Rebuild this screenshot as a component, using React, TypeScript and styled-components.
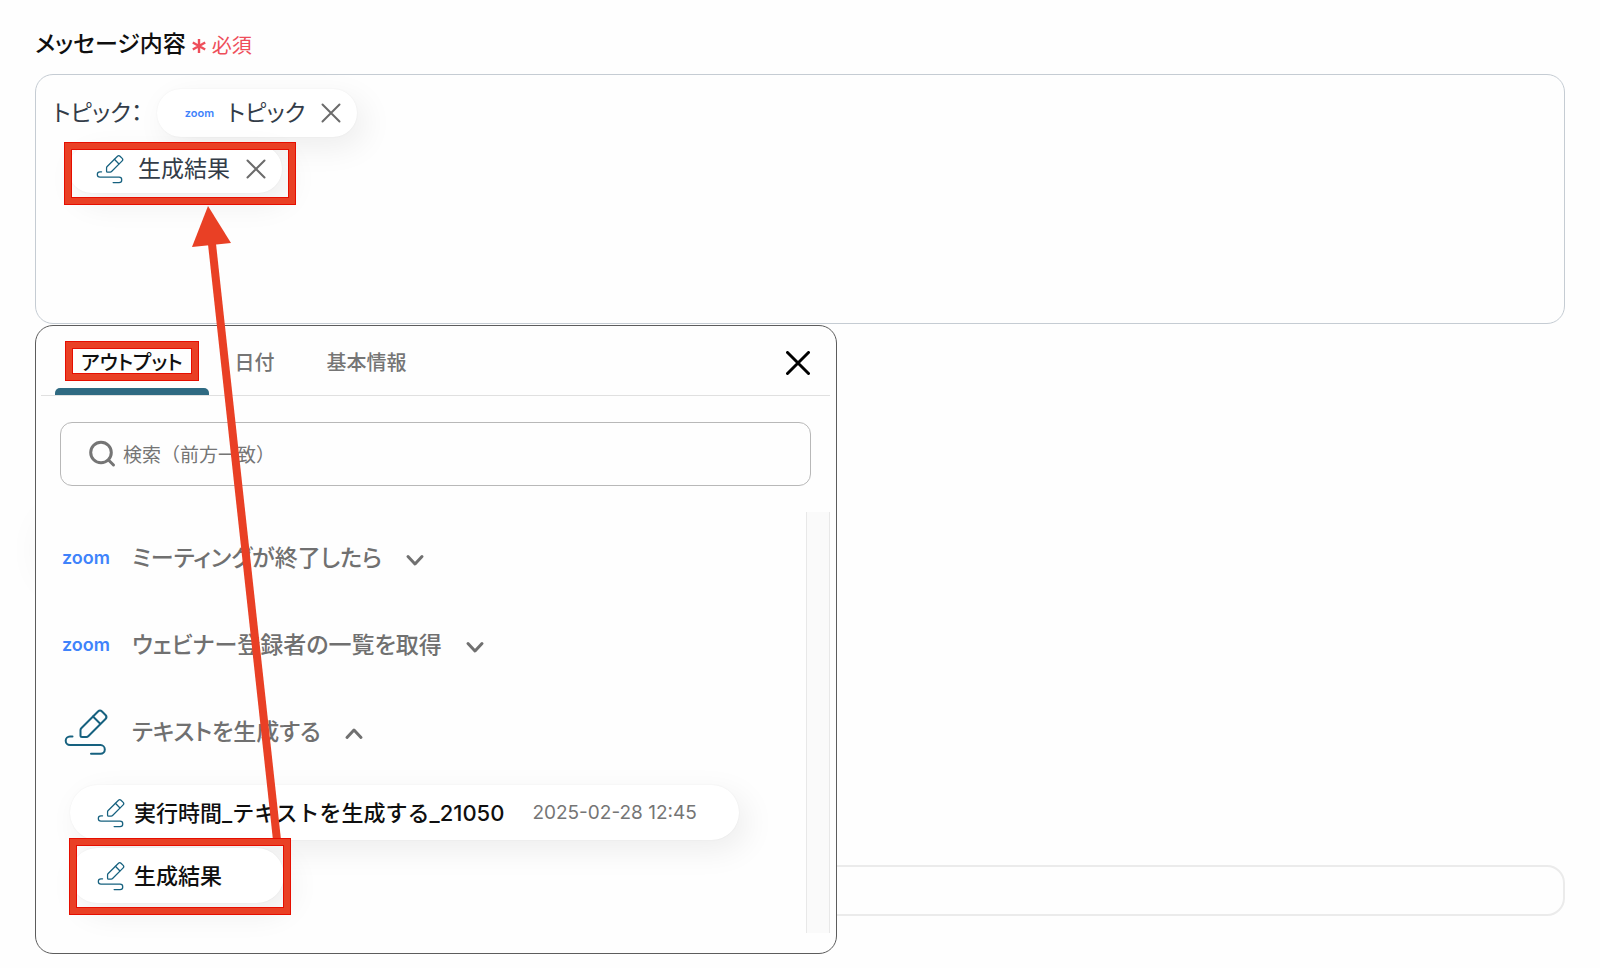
import React from "react";
import styled, { createGlobalStyle, css } from "styled-components";

const GlobalStyle = createGlobalStyle`
  *, *::before, *::after { box-sizing: border-box; }
  body {
    margin: 0;
    background: #fefefe;
    color: #0f0f0f;
    font-family: Inter, "Noto Sans CJK JP", sans-serif;
    font-feature-settings: "palt";
    line-height: 28px;
  }
  button, input { font: inherit; font-feature-settings: inherit; color: inherit; }
`;

const bareButton = css`
  display: flex;
  align-items: center;
  justify-content: center;
  padding: 0;
  border: 0;
  background: none;
  cursor: pointer;
`;

const Page = styled.main`
  position: relative;
  overflow: hidden;
  padding: 24px 35px 52px;
`;

const FieldLabel = styled.div`
  display: flex;
  align-items: center;
  gap: 6px;
  height: 40px;
  font-size: 23px;
  font-weight: 500;
`;

const Required = styled.span`
  display: flex;
  align-items: center;
  gap: 6px;
  padding-top: 3px;
  color: #ee4e5a;
  font-size: 20px;
  font-weight: 400;
`;

const Editor = styled.div`
  margin-top: 10px;
  height: 250px;
  padding: 14px 17px;
  border: 1px solid #c5ccd3;
  border-radius: 18px;
  color: #333c48;
  font-size: 23px;
`;

const EditorLine = styled.div`
  display: flex;
  align-items: center;
  height: 48px;
  margin-bottom: 8px;
`;

const Token = styled.span`
  display: flex;
  align-items: center;
  height: 48px;
  margin-left: 15px;
  padding: 0 16px 0 26px;
  border-radius: 24px;
  background: #fff;
  box-shadow: 0 0 2px rgba(0, 0, 0, 0.06), 8px 10px 32px rgba(0, 0, 0, 0.07);
`;

const TokenText = styled.span`
  margin: 0 16px 0 12px;
`;

const TokenIcon = styled.span`
  display: flex;
  justify-content: center;
  width: 32px;
`;

const IconButton = styled.button<{ $muted?: boolean }>`
  ${bareButton}
  color: ${(p) => (p.$muted ? "#6b6b6b" : "#000")};
`;

const Wordmark = styled.span<{ $size: number }>`
  color: #3f83fb;
  font-size: ${(p) => p.$size}px;
  font-weight: 600;
  line-height: 1;
`;

const NextField = styled.input`
  display: block;
  width: 100%;
  height: 51px;
  margin-top: 541px;
  padding: 0 18px;
  border: 2px solid #ebebeb;
  border-radius: 18px;
  background: #fefefe;
`;

const Popover = styled.section`
  position: absolute;
  top: 325px;
  left: 35px;
  width: 802px;
  height: 629px;
  padding: 0 6px 20px 5px;
  border: 1px solid #5c5c5c;
  border-radius: 18px;
  background: #fefefe;
  display: flex;
  flex-direction: column;
`;

const PopoverGlow = styled.div`
  position: absolute;
  top: 515px;
  left: 45px;
  width: 70px;
  height: 70px;
  border-radius: 35px;
  box-shadow: 0 0 40px rgba(0, 0, 0, 0.08);
`;

const PopoverHeader = styled.header`
  display: flex;
  align-items: stretch;
  justify-content: space-between;
  height: 70px;
  padding: 0 20px 0 14px;
  border-bottom: 1px solid #e0e0e0;
`;

const Tabs = styled.div`
  display: flex;
`;

const Tab = styled.button<{ $active?: boolean }>`
  ${bareButton}
  position: relative;
  padding: 4px 26px 0;
  font-size: 20px;
  font-weight: 500;
  color: ${(p) => (p.$active ? "#0f0f0f" : "#757575")};
  &::after {
    content: "";
    display: ${(p) => (p.$active ? "block" : "none")};
    position: absolute;
    left: 0;
    right: 0;
    bottom: 0;
    height: 7px;
    border-radius: 5px 5px 0 0;
    background: #2f6a82;
  }
`;

const CloseButton = styled(IconButton)`
  padding-top: 4px;
`;

const Search = styled.label`
  display: flex;
  align-items: center;
  gap: 7px;
  flex: none;
  height: 64px;
  margin: 26px 19px;
  padding: 0 27px;
  border: 1px solid #b8b8b8;
  border-radius: 12px;
  color: #757575;
`;

const SearchInput = styled.input`
  flex: 1;
  min-width: 0;
  padding: 4px 0 0;
  border: 0;
  outline: 0;
  background: none;
  font-size: 19px;
  font-feature-settings: normal;
  &::placeholder { color: #757575; opacity: 1; }
`;

const ListArea = styled.div`
  flex: 1;
  display: flex;
  min-height: 0;
`;

const Groups = styled.div`
  flex: 1;
  min-width: 0;
  padding: 2px 21px 0;
`;

const ScrollTrack = styled.div`
  width: 24px;
  border: solid #e8e8e8;
  border-width: 0 1px;
  background: #fafafa;
`;

const GroupButton = styled.button`
  ${bareButton}
  height: 87px;
  color: #707070;
  font-size: 23px;
  font-weight: 500;
`;

const GroupIcon = styled.span`
  display: flex;
  align-items: center;
  width: 48px;
  margin-right: 22px;
`;

const GroupName = styled.span`
  margin-right: 22px;
`;

const Outputs = styled.div`
  display: flex;
  flex-direction: column;
  align-items: flex-start;
  gap: 8px;
  padding: 10px 0 0 8px;
`;

const OutputItem = styled.button`
  ${bareButton}
  height: 55px;
  padding: 0 42px 0 26px;
  border-radius: 28px;
  background: #fff;
  box-shadow: 0 0 2px rgba(0, 0, 0, 0.06), 8px 10px 32px rgba(0, 0, 0, 0.07);
  font-size: 22px;
  font-weight: 500;
  font-feature-settings: normal;
`;

const OutputName = styled.span`
  margin: 0 20px 0 8px;
`;

const OutputDate = styled.span`
  margin-left: 8px;
  color: #757575;
  font-size: 19px;
  font-weight: 400;
`;

const Highlight = styled.div<{ $x: number; $y: number; $w: number; $h: number }>`
  position: absolute;
  left: ${(p) => p.$x}px;
  top: ${(p) => p.$y}px;
  width: ${(p) => p.$w}px;
  height: ${(p) => p.$h}px;
  border: 8px solid #e94025;
  outline: 1px solid #e60e00;
  outline-offset: -1px;
  pointer-events: none;
  &::after {
    content: "";
    position: absolute;
    inset: -1px;
    border: 1px solid #e60e00;
  }
`;

const ArrowLayer = styled.svg`
  position: absolute;
  top: 0;
  left: 0;
  pointer-events: none;
`;

const Zoom = ({ size }: { size: number }) => <Wordmark $size={size}>zoom</Wordmark>;

const Pencil = ({ size, stroke }: { size: number; stroke: number }) => (
  <svg width={size} height={size} viewBox="0 0 48 48" fill="none" stroke="#16617f" strokeWidth={stroke} strokeLinecap="round" strokeLinejoin="round" aria-hidden="true">
    <path d="M18.500 27.500v-5.500q0-1 1-2L36 3.500q2-2 4 0l3.500 3.500q2 2 0 4L26.500 28q-1 1-2 1h-4.500q-1.500 0-1.500-1.500z" />
    <path d="M31 8.500l7 7" />
    <path d="M10.500 28.500H8a4.300 4.300 0 0 0 0 8.600h30.500a4.300 4.300 0 0 1 0 8.600H29" />
  </svg>
);

const Cross = ({ size, stroke }: { size: number; stroke: number }) => (
  <svg width={size} height={size} viewBox={`0 0 ${size} ${size}`} fill="none" stroke="currentColor" strokeWidth={stroke} strokeLinecap="round" aria-hidden="true">
    <path d={`M1.500 1.500L${size - 1.5} ${size - 1.5}M${size - 1.5} 1.500L1.500 ${size - 1.5}`} />
  </svg>
);

const Chevron = ({ up }: { up?: boolean }) => (
  <svg width="22" height="18" viewBox="0 0 22 18" fill="none" stroke="currentColor" strokeWidth="3" strokeLinecap="round" strokeLinejoin="round" aria-hidden="true">
    <path d={up ? "M4 14.500l7-7.500 7 7.500" : "M4 7.500l7 7.500 7-7.500"} />
  </svg>
);

const Asterisk = () => (
  <svg width="14" height="16" viewBox="0 0 14 16" stroke="currentColor" strokeWidth="2.400" strokeLinecap="butt" aria-hidden="true">
    <path d="M7 1v14M.800 4.500l12.400 7M13.200 4.500L.800 11.500" />
  </svg>
);

const SearchIcon = () => (
  <svg width="28" height="28" viewBox="0 0 28 28" fill="none" stroke="currentColor" strokeWidth="3" strokeLinecap="round" aria-hidden="true">
    <circle cx="13" cy="12.500" r="10.300" />
    <path d="M20.500 20l5 5" />
  </svg>
);

export default function App() {
  return (
    <>
      <GlobalStyle />
      <Page>
        <FieldLabel id="message-label">
          メッセージ内容
          <Required>
            <Asterisk />
            必須
          </Required>
        </FieldLabel>
        <Editor role="group" aria-labelledby="message-label">
          <EditorLine>
            <span>トピック：</span>
            <Token>
              <TokenIcon><Zoom size={11} /></TokenIcon>
              <TokenText>トピック</TokenText>
              <IconButton $muted aria-label="トピックを削除"><Cross size={20} stroke={2} /></IconButton>
            </Token>
          </EditorLine>
          <EditorLine>
            <Token>
              <TokenIcon><Pencil size={30} stroke={2} /></TokenIcon>
              <TokenText>生成結果</TokenText>
              <IconButton $muted aria-label="生成結果を削除"><Cross size={20} stroke={2} /></IconButton>
            </Token>
          </EditorLine>
        </Editor>
        <NextField aria-label="追加の入力" />

        <PopoverGlow />
        <Popover>
          <PopoverHeader>
            <Tabs role="tablist">
              <Tab role="tab" aria-selected="true" $active>アウトプット</Tab>
              <Tab role="tab" aria-selected="false">日付</Tab>
              <Tab role="tab" aria-selected="false">基本情報</Tab>
            </Tabs>
            <CloseButton aria-label="閉じる"><Cross size={24} stroke={3} /></CloseButton>
          </PopoverHeader>
          <Search>
            <SearchIcon />
            <SearchInput type="text" aria-label="検索" placeholder="検索（前方一致）" />
          </Search>
          <ListArea>
            <Groups>
              <GroupButton aria-expanded="false">
                <GroupIcon><Zoom size={18} /></GroupIcon>
                <GroupName>ミーティングが終了したら</GroupName>
                <Chevron />
              </GroupButton>
              <GroupButton aria-expanded="false">
                <GroupIcon><Zoom size={18} /></GroupIcon>
                <GroupName>ウェビナー登録者の一覧を取得</GroupName>
                <Chevron />
              </GroupButton>
              <GroupButton aria-expanded="true">
                <GroupIcon><Pencil size={48} stroke={2} /></GroupIcon>
                <GroupName>テキストを生成する</GroupName>
                <Chevron up />
              </GroupButton>
              <Outputs>
                <OutputItem>
                  <Pencil size={30} stroke={2} />
                  <OutputName>実行時間_テキストを生成する_21050</OutputName>
                  <OutputDate>2025-02-28 12:45</OutputDate>
                </OutputItem>
                <OutputItem>
                  <Pencil size={30} stroke={2} />
                  <OutputName>生成結果</OutputName>
                </OutputItem>
              </Outputs>
            </Groups>
            <ScrollTrack />
          </ListArea>
        </Popover>

        <ArrowLayer width="400" height="920" viewBox="0 0 400 920" aria-hidden="true">
          <path d="M212 244L277 840" stroke="#e94025" strokeWidth="8" />
          <path d="M208 206L192 247L231 243Z" fill="#e94025" />
        </ArrowLayer>
        <Highlight $x={64} $y={142} $w={232} $h={63} />
        <Highlight $x={65} $y={341} $w={134} $h={40} />
        <Highlight $x={69} $y={838} $w={222} $h={77} />
      </Page>
    </>
  );
}
